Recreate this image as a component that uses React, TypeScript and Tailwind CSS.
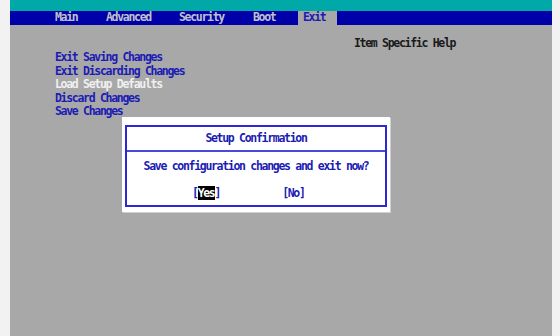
export default function App() {
  const font = "font-['DejaVu_Sans_Mono','Liberation_Mono',monospace] text-[11.5px] leading-[13.5px] tracking-[-1.3px] font-bold";

  const items = [
    { label: 'Exit Saving Changes', active: false },
    { label: 'Exit Discarding Changes', active: false },
    { label: 'Load Setup Defaults', active: true },
    { label: 'Discard Changes', active: false },
    { label: 'Save Changes', active: false },
  ];

  return (
    <div className={`w-[560px] h-[336px] bg-[#f2f2f2] px-[10px] ${font}`}>
      <div className="w-[542px] h-full flex flex-col">
        {/* Top strip */}
        <div className="h-[11px] bg-[#00a8a8]" />

        {/* Menu bar */}
        <div className="h-[14px] bg-[#0000a8] flex items-center text-[#c0c0cc]">
          <span className="pl-[45px] w-[96px]">Main</span>
          <span className="w-[73px]">Advanced</span>
          <span className="w-[74px]">Security</span>
          <span className="w-[45px]">Boot</span>
          <span className="w-[39px] h-full bg-[#a8a8a8] text-[#1c1cb4] pl-[5px] flex items-center">Exit</span>
        </div>

        {/* Body */}
        <div className="flex-1 bg-[#a8a8a8] relative flex">
          <div className="w-[299px] pl-[45px] pt-[26px] flex flex-col">
            {items.map((it) => (
              <span key={it.label} className={it.active ? 'text-[#f0f0f0]' : 'text-[#1c1cb4]'}>
                {it.label}
              </span>
            ))}
          </div>
          <div className="pl-[45px] pt-[12px] text-[#1a1a1a]">Item Specific Help</div>

          {/* Confirmation dialog */}
          <div className="absolute left-[112px] top-[92px] w-[268px] h-[95px] bg-white px-[3px] pt-[8px] pb-[5px] shadow-[1px_1px_0_#d0d0d0]">
            <div className="h-full border-2 border-[#2a2ad0] flex flex-col text-[#1c1cb4]">
              <div className="h-[25px] border-b-2 border-[#4a4ad8] flex items-center justify-center">
                Setup Confirmation
              </div>
              <div className="pt-[8px] text-center">Save configuration changes and exit now?</div>
              <div className="pt-[13px] pl-[65px] flex gap-[62px]">
                <span>
                  [<span className="bg-black text-white">Yes</span>]
                </span>
                <span>[No]</span>
              </div>
            </div>
          </div>
        </div>
      </div>
    </div>
  );
}
